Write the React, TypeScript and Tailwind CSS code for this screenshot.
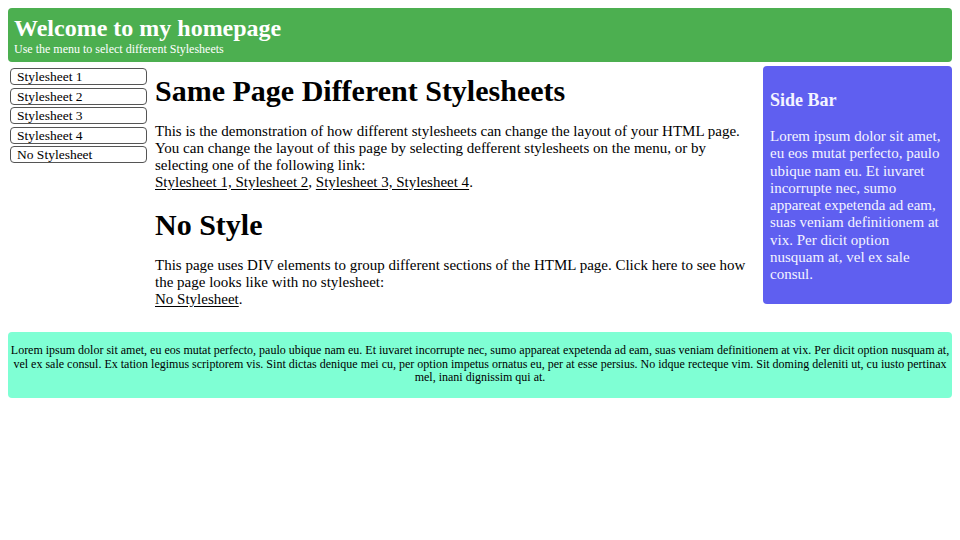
export default function App() {
  const menu = ["Stylesheet 1", "Stylesheet 2", "Stylesheet 3", "Stylesheet 4", "No Stylesheet"];
  return (
    <div className="w-[960px] h-[540px] bg-white text-black p-[8px]" style={{ fontFamily: '"Liberation Serif", "Times New Roman", serif' }}>
      <div className="bg-[#4caf50] rounded-[4px] px-[6px] pt-[6px] pb-[6px] text-white">
        <h1 className="text-[24px] leading-[28px] font-bold">Welcome to my homepage</h1>
        <div className="text-[12px] leading-[14px]">Use the menu to select different Stylesheets</div>
      </div>
      <div className="flex items-start mt-[4px]">
        <div className="w-[139px] shrink-0 pt-[2px]">
          {menu.map((m) => (
            <div
              key={m}
              className="ml-[2px] w-[137px] h-[17px] mb-[2.5px] border border-[#555] rounded-[4px] text-[13.5px] leading-[15px] pl-[6px] flex items-center"
            >
              {m}
            </div>
          ))}
        </div>
        <div className="flex-1 ml-[8px] pt-[5.5px] text-[15px] leading-[17px]">
          <h1 className="text-[30px] leading-[37px] font-bold">Same Page Different Stylesheets</h1>
          <p className="mt-[14px]">
            This is the demonstration of how different stylesheets can change the layout of your HTML page. You can change the layout of this page by selecting defferent stylesheets on the menu, or by selecting one of the following link:
            <br />
            <a className="underline underline-offset-2">Stylesheet 1, Stylesheet 2</a>, <a className="underline underline-offset-2">Stylesheet 3, Stylesheet 4</a>.
          </p>
          <h1 className="mt-[15px] text-[30px] leading-[37px] font-bold">No Style</h1>
          <p className="mt-[14px]">
            This page uses DIV elements to group different sections of the HTML page. Click here to see how the page looks like with no stylesheet:
            <br />
            <a className="underline underline-offset-2">No Stylesheet</a>.
          </p>
        </div>
        <div className="w-[189px] shrink-0 ml-[8px] bg-[#5f5ff0] rounded-[4px] px-[7px] pt-[23.5px] pb-[21px] text-[#f4f4ff]">
          <h3 className="text-[18px] leading-[21px] font-bold">Side Bar</h3>
          <p className="mt-[17.5px] text-[15px] leading-[17.25px]">
            Lorem ipsum dolor sit amet, eu eos mutat perfecto, paulo ubique nam eu. Et iuvaret incorrupte nec, sumo appareat expetenda ad eam, suas veniam definitionem at vix. Per dicit option nusquam at, vel ex sale consul.
          </p>
        </div>
      </div>
      <div className="mt-[24.5px] bg-[#7fffd4] rounded-[4px] px-[2px] pt-[12px] pb-[13px] text-center text-[12px] leading-[13.6px]">
        Lorem ipsum dolor sit amet, eu eos mutat perfecto, paulo ubique nam eu. Et iuvaret incorrupte nec, sumo appareat expetenda ad eam, suas veniam definitionem at vix. Per dicit option nusquam at, vel ex sale consul. Ex tation legimus scriptorem vis. Sint dictas denique mei cu, per option impetus ornatus eu, per at esse persius. No idque recteque vim. Sit doming deleniti ut, cu iusto pertinax mel, inani dignissim qui at.
      </div>
    </div>
  );
}
